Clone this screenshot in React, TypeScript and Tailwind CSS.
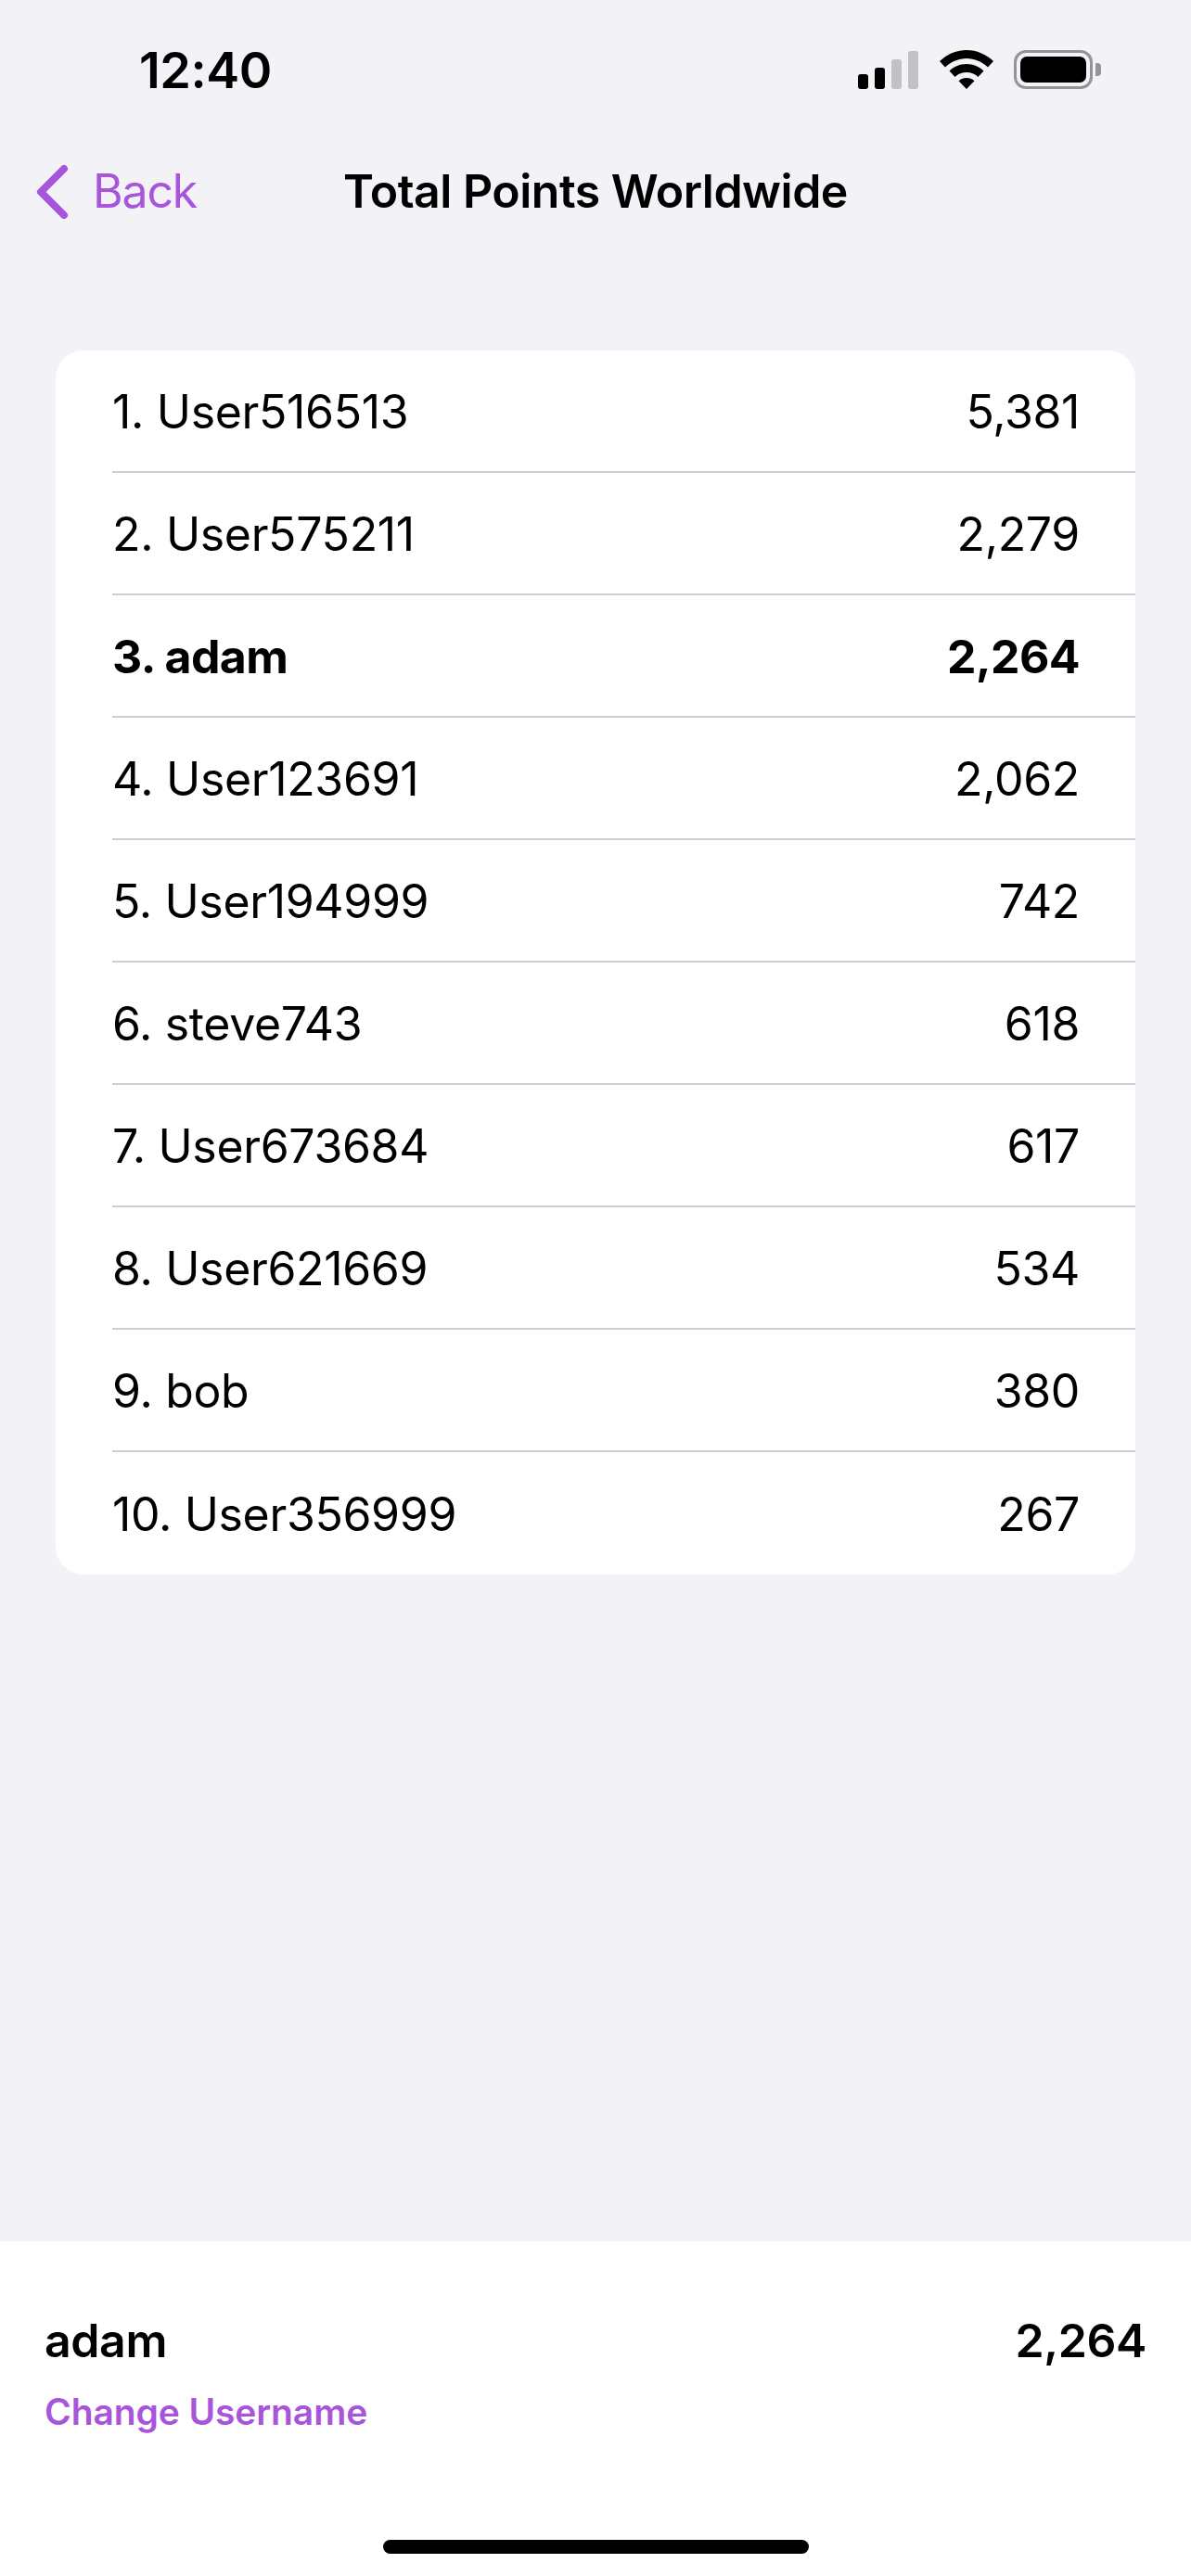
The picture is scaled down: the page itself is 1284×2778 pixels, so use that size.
const FONT = "font-['Inter','Liberation_Sans',sans-serif]";

type Score = { rank: number; name: string; points: string; isCurrentUser?: boolean };

const SCORES: Score[] = [
  { rank: 1, name: "User516513", points: "5,381" },
  { rank: 2, name: "User575211", points: "2,279" },
  { rank: 3, name: "adam", points: "2,264", isCurrentUser: true },
  { rank: 4, name: "User123691", points: "2,062" },
  { rank: 5, name: "User194999", points: "742" },
  { rank: 6, name: "steve743", points: "618" },
  { rank: 7, name: "User673684", points: "617" },
  { rank: 8, name: "User621669", points: "534" },
  { rank: 9, name: "bob", points: "380" },
  { rank: 10, name: "User356999", points: "267" },
];

function StatusIcons() {
  return (
    <div className="flex items-end">
      <div className="flex items-end gap-[7px]">
        <div className="h-[16px] w-[11px] rounded-[3px] bg-black" />
        <div className="h-[23px] w-[11px] rounded-[3px] bg-black" />
        <div className="h-[32px] w-[11px] rounded-[3px] bg-[#c1c1c6]" />
        <div className="h-[41px] w-[11px] rounded-[3px] bg-[#c1c1c6]" />
      </div>
      <svg className="ml-[23px]" width="58" height="42" viewBox="0 0 58 42">
        <path d="M29 0C18 0 8 4.500 0 12L6 18.500C12.500 12.500 20.500 9 29 9C37.500 9 45.500 12.500 52 18.500L58 12C50 4.500 40 0 29 0Z" fill="#000" />
        <path d="M29 15C22 15 15.500 17.700 10.500 22.500L16.500 29C20 25.700 24.300 24 29 24C33.700 24 38 25.700 41.500 29L47.500 22.500C42.500 17.700 36 15 29 15Z" fill="#000" />
        <path d="M29 30C25.800 30 23 31.200 20.500 33.200L29 42L37.500 33.200C35 31.200 32.200 30 29 30Z" fill="#000" />
      </svg>
      <div className="ml-[22px] flex items-center">
        <div className="flex h-[42px] w-[85px] rounded-[13px] border-[3px] border-[#949497] p-[4px]">
          <div className="flex-1 rounded-[7px] bg-black" />
        </div>
        <div className="ml-[3px] h-[14px] w-[6px] rounded-r-[4px] bg-[#949497]" />
      </div>
    </div>
  );
}

function ScoreRow({ score, isLast }: { score: Score; isLast: boolean }) {
  return (
    <div className="pl-[61px]">
      <div
        className={`flex h-[132px] items-center justify-between pt-[2px] pr-[60px] text-[50px] text-black ${
          score.isCurrentUser ? "font-bold tracking-[-0.6px]" : "font-normal tracking-[-0.35px]"
        } ${isLast ? "" : "border-b-2 border-[#d0d0d3]"}`}
      >
        <span>
          {score.rank}. {score.name}
        </span>
        <span>{score.points}</span>
      </div>
    </div>
  );
}

export default function App() {
  return (
    <div className={`flex h-[2778px] w-[1284px] flex-col overflow-hidden bg-[#f2f2f7] ${FONT}`}>
      <div className="flex h-[96px] items-end justify-between pl-[150px] pr-[97px]">
        <span className="mb-[-7px] text-[54px] leading-[54px] font-semibold tracking-[-0.5px] text-black">12:40</span>
        <StatusIcons />
      </div>

      <div className="mt-[73px] grid h-[70px] grid-cols-[1fr_auto_1fr] items-center">
        <div className="flex items-center pl-[39px]">
          <svg width="36" height="58" viewBox="0 0 36 58" fill="none">
            <path d="M30 4L5 29L30 54" stroke="#a855db" strokeWidth="8" strokeLinecap="round" strokeLinejoin="round" />
          </svg>
          <span className="ml-[25px] text-[50px] tracking-[-1.2px] text-[#a855db]">Back</span>
        </div>
        <span className="text-[50px] font-semibold tracking-[-0.5px] text-black">Total Points Worldwide</span>
        <div />
      </div>

      <div className="mx-[60px] mt-[139px] overflow-hidden rounded-[30px] bg-white">
        {SCORES.map((score, i) => (
          <ScoreRow key={score.rank} score={score} isLast={i === SCORES.length - 1} />
        ))}
      </div>

      <div className="mt-auto flex h-[361px] flex-col bg-white px-[48px] pt-[77px]">
        <div className="flex items-center justify-between text-[50px] leading-[60px] font-semibold tracking-[-0.4px] text-black">
          <span>adam</span>
          <span>2,264</span>
        </div>
        <button type="button" className="mt-[24px] self-start text-[39px] leading-[46px] font-semibold tracking-[-0.1px] text-[#a855db]">
          Change Username
        </button>
        <div className="mt-auto mb-[24px] h-[15px] w-[459px] self-center rounded-full bg-black" />
      </div>
    </div>
  );
}
